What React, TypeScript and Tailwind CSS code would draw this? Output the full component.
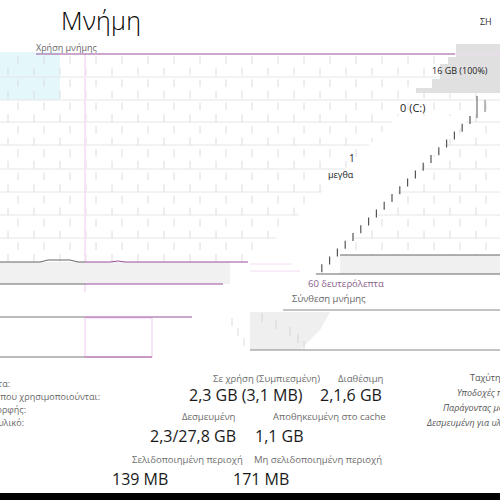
import React from "react";

const PURPLE = "#9a4f9a";

// staggered "brick" ticks of the usage grid
function gridTicks(x0: number, x1: number, y0: number, y1: number) {
  const out: React.ReactNode[] = [];
  const sub = 11.65;
  let i = 0;
  for (let y = y0; y < y1 - 1; y += sub, i++) {
    const off = i % 2 === 0 ? 18 : 8;
    for (let x = x0 + off; x < x1; x += 26) {
      out.push(
        <line key={`t${i}-${x}`} x1={x} y1={y + 2} x2={x} y2={y + sub - 2} stroke="#dcdcdc" strokeWidth={1} />
      );
    }
  }
  return out;
}

function UsageChart() {
  const rows = [77, 100, 122, 145, 169, 192, 215, 238];
  const diag = Array.from({ length: 20 }, (_, t) => ({ x: 470 - t * 7.8, y: 116 + t * 7.8 }));
  return (
    <svg className="absolute inset-0" width="500" height="256" viewBox="0 40 500 256">
      <rect x="0" y="52" width="60" height="48" fill="#e4f8fc" />
      {rows.map((y) => (
        <line key={y} x1="0" y1={y} x2="500" y2={y} stroke="#e6e6e6" />
      ))}
      {gridTicks(0, 500, 54, 262)}
      <line x1="85" y1="54" x2="85" y2="292" stroke="#f6e4f6" strokeWidth="2" />
      <polygon
        points="456,44 500,44 500,93 416,93 416,88 432,88 432,79 440,79 440,64 448,64 448,57 456,57"
        fill="#e0e0e0"
      />
      <line x1="36" y1="54" x2="455" y2="54" stroke={PURPLE} strokeWidth="1.2" />
      <line x1="455" y1="54" x2="500" y2="54" stroke="#f3d8f3" strokeWidth="1.2" />
      <polygon points="398,116 472,116 318,274 252,262" fill="#ffffff" />
      {diag.map((p, i) => (
        <line key={i} x1={p.x} y1={p.y} x2={p.x} y2={p.y + 8} stroke="#555" strokeWidth="1.2" />
      ))}
      <line x1="477" y1="96" x2="477" y2="118" stroke="#555" />
      <line x1="485" y1="100" x2="485" y2="112" stroke="#777" />
      <rect x="340" y="255" width="160" height="19" fill="#f0f0f0" />
      <line x1="340" y1="255" x2="500" y2="255" stroke="#666" />
      <line x1="316" y1="274" x2="500" y2="274" stroke="#666" />
      <rect x="0" y="262" width="230" height="22" fill="#f1f1f1" />
      <path d="M0 262 L40 262 L48 260 L70 260 L78 262 L85 262" fill="none" stroke="#666" />
      <path d="M85 262 L110 262 L118 261 L125 262 L248 262" fill="none" stroke={PURPLE} />
      <line x1="0" y1="284" x2="85" y2="284" stroke="#666" />
      <line x1="85" y1="284" x2="223" y2="284" stroke={PURPLE} />
      <line x1="250" y1="264" x2="292" y2="264" stroke="#f5dcf5" />
      <line x1="250" y1="271" x2="300" y2="271" stroke="#f5dcf5" />
    </svg>
  );
}

function CompositionBar() {
  return (
    <svg className="absolute inset-0" width="500" height="64" viewBox="0 296 500 64">
      <polygon points="250,312 330,312 320,330 300,350 250,350" fill="#efefef" />
      {[262, 280, 298, 310, 320].map((x, i) => (
        <line key={x} x1={x - i * 4} y1={313 + i * 7} x2={x - i * 4} y2={322 + i * 7} stroke="#d4d4d4" />
      ))}
      {[232, 238, 244].map((x, i) => (
        <line key={x} x1={x} y1={318 + i * 10} x2={x} y2={326 + i * 10} stroke="#dcdcdc" />
      ))}
      <line x1="283" y1="310" x2="500" y2="310" stroke="#888" />
      <line x1="250" y1="350" x2="500" y2="350" stroke="#888" />
      <rect x="85" y="318" width="67" height="39" fill="none" stroke="#f5dcf5" strokeWidth="1.5" />
      <line x1="0" y1="317" x2="85" y2="317" stroke="#777" />
      <line x1="85" y1="317" x2="192" y2="317" stroke={PURPLE} />
      <line x1="0" y1="357" x2="85" y2="357" stroke="#777" />
      <line x1="85" y1="357" x2="152" y2="357" stroke={PURPLE} />
    </svg>
  );
}

const leftCol = [
  { t: "Ταχύτητα:", w: "w-[10px]" },
  { t: "Υποδοχές που χρησιμοποιούνται:", w: "w-[100px]" },
  { t: "Παράγοντας μορφής:", w: "w-[26px]" },
  { t: "Δεσμευμένη για υλικό:", w: "w-[24px]" },
];

const rightCol = [
  { t: "Ταχύτητα:", ml: "ml-[45px]", it: false },
  { t: "Υποδοχές που χρησιμοποιούνται:", ml: "ml-[32px]", it: true },
  { t: "Παράγοντας μορφής:", ml: "ml-[18px]", it: true },
  { t: "Δεσμευμένη για υλικό:", ml: "ml-[2px]", it: true },
];

export default function App() {
  return (
    <div className="w-[500px] h-[500px] overflow-hidden bg-white font-['Open_Sans',sans-serif] text-[#1a1a1a] flex flex-col">
      <div className="h-[40px] flex items-start justify-between">
        <div className="ml-[61px] mt-[4px] text-[25px] leading-[32px] font-light tracking-[0.3px] text-black">Μνήμη</div>
        <div className="mt-[16px] text-[9px] leading-[12px] text-[#333] w-[20px] overflow-hidden whitespace-nowrap">ΣΗ</div>
      </div>

      <div className="relative h-[256px] shrink-0">
        <UsageChart />
        <div className="absolute left-[36px] top-[2px] text-[9px] leading-[12px] text-[#666]">Χρήση μνήμης</div>
        <div className="absolute left-[432px] top-[25px] text-[9px] leading-[12px] text-[#222]">16 GB (100%)</div>
        <div className="absolute left-[400px] top-[61px] text-[11px] leading-[14px] text-[#222]">0 (C:)</div>
        <div className="absolute left-[349px] top-[112px] text-[10px] leading-[12px] text-[#222]">1</div>
        <div className="absolute left-[328px] top-[129px] text-[9px] leading-[12px] text-[#222]">μεγθα</div>
        <div className="absolute left-[308px] top-[238px] text-[9.5px] leading-[12px] text-[#8a5d8a]">60 δευτερόλεπτα</div>
      </div>

      <div className="relative h-[64px] shrink-0">
        <CompositionBar />
        <div className="absolute left-[292px] top-[-3px] text-[9.5px] leading-[12px] text-[#666]">Σύνθεση μνήμης</div>
      </div>

      <div className="flex h-[133px] shrink-0">
        <div className="w-[110px] pt-[17px] text-[9px] leading-[13px] text-[#666]">
          {leftCol.map((l) => (
            <div key={l.t} className={`${l.w} flex justify-end overflow-hidden whitespace-nowrap`}>
              {l.t}
            </div>
          ))}
        </div>

        <div className="w-[315px] pt-[12px] whitespace-nowrap">
          <div className="flex text-[9.5px] leading-[13px] text-[#6d6d6d]">
            <div className="ml-[103px] w-[125px]">Σε χρήση (Συμπιεσμένη)</div>
            <div>Διαθέσιμη</div>
          </div>
          <div className="flex text-[16px] leading-[20px]">
            <div className="ml-[79px] w-[131px]">2,3 GB (3,1 MB)</div>
            <div>2,1,6 GB</div>
          </div>
          <div className="flex mt-[5px] text-[9.5px] leading-[13px] text-[#6d6d6d]">
            <div className="ml-[72px] w-[91px]">Δεσμευμένη</div>
            <div>Αποθηκευμένη στο cache</div>
          </div>
          <div className="flex mt-[3px] text-[16px] leading-[20px]">
            <div className="ml-[40px] w-[105px]">2,3/27,8 GB</div>
            <div>1,1 GB</div>
          </div>
          <div className="flex mt-[7px] text-[9.5px] leading-[13px] text-[#6d6d6d]">
            <div className="ml-[22px] w-[122px]">Σελιδοποιημένη περιοχή</div>
            <div>Μη σελιδοποιημένη περιοχή</div>
          </div>
          <div className="flex mt-[3px] text-[16px] leading-[20px]">
            <div className="ml-[2px] w-[121px]">139 MB</div>
            <div>171 MB</div>
          </div>
        </div>

        <div className="w-[75px] pt-[10px] text-[9px] leading-[15px] text-[#555] overflow-hidden whitespace-nowrap">
          {rightCol.map((r) => (
            <div key={r.t} className={`${r.ml} ${r.it ? "italic" : ""}`}>
              {r.t}
            </div>
          ))}
        </div>
      </div>

      <div className="h-[7px] bg-black shrink-0" />
    </div>
  );
}
